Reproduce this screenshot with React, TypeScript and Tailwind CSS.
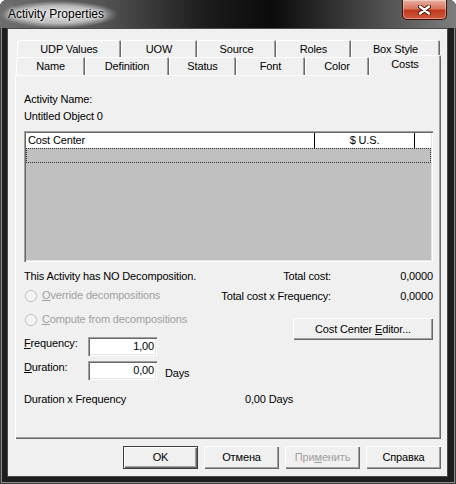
import React from 'react';

const backTabs = [
  { label: 'UDP Values', w: 'w-[104px]' },
  { label: 'UOW', w: 'w-[76px]' },
  { label: 'Source', w: 'w-[79px]' },
  { label: 'Roles', w: 'w-[75px]' },
  { label: 'Box Style', w: 'w-[89px]' },
];

const frontTabs = [
  { label: 'Name', w: 'w-[69px]' },
  { label: 'Definition', w: 'w-[84px]' },
  { label: 'Status', w: 'w-[67px]' },
  { label: 'Font', w: 'w-[69px]' },
  { label: 'Color', w: 'w-[64px]' },
];

const raised =
  'shadow-[inset_1px_1px_0_#ffffff,inset_-1px_-1px_0_#696969,inset_-2px_-2px_0_#a0a0a0]';
const sunken =
  'shadow-[inset_1px_1px_0_#a0a0a0,inset_2px_2px_0_#696969,inset_-1px_-1px_0_#ffffff,inset_-2px_-2px_0_#e3e3e3]';
const tabEdge =
  'shadow-[inset_1px_1px_0_#ffffff,inset_-1px_0_0_#696969,inset_-2px_0_0_#a0a0a0]';

function Radio({ children }: { children: React.ReactNode }) {
  return (
    <div className="flex items-center h-[13px] pl-[1px] text-[#a0a0a0]">
      <span className="w-[12px] h-[12px] rounded-full border border-[#bcbcbc] bg-[#f4f4f4] shadow-[inset_0_0_0_1px_#ffffff]" />
      <span className="ml-[5px]">{children}</span>
    </div>
  );
}

function Field({ value }: { value: string }) {
  return (
    <div className={`w-[69px] h-[19px] bg-white flex items-center justify-end pr-[3px] ${sunken}`}>
      {value}
    </div>
  );
}

export default function App() {
  return (
    <div className="w-[456px] h-[484px] bg-white font-['Liberation_Sans',Arial,sans-serif] text-[11px] leading-[13px] tracking-[-0.15px] text-black">
      <div className="w-[456px] h-[484px] rounded-t-[7px] overflow-hidden bg-[#1e1e1e] shadow-[inset_0_0_0_1px_#3c3c3c,inset_0_0_0_2px_#8a8a8a] flex flex-col">
        {/* Title bar */}
        <div className="relative h-[28px] shrink-0 flex items-center bg-[linear-gradient(90deg,#6e6e6e_0%,#555555_22%,#1c1c1c_45%,#0b0b0b_60%,#3f3f3f_78%,#7d7d7d_100%)]">
          <span className="pl-[8px] pr-[14px] py-[6px] text-[12px] leading-[15px] tracking-normal bg-[radial-gradient(closest-side,rgba(225,225,225,0.95)_0%,rgba(215,215,215,0.75)_65%,rgba(200,200,200,0)_100%)] [text-shadow:0_0_3px_#ffffff,0_0_6px_#ffffff]">
            Activity Properties
          </span>
          <div className="absolute top-0 right-[9px] w-[45px] h-[20px] flex items-center justify-center rounded-b-[5px] border border-t-0 border-[#3d1008] bg-[linear-gradient(180deg,#eab0a2_0%,#d8755f_45%,#c03a1f_55%,#cf5a3d_100%)] shadow-[inset_0_0_0_1px_rgba(255,255,255,0.35)]">
            <svg width="13" height="10" viewBox="0 0 13 10">
              <path d="M2 1.5 L11 8.5 M11 1.5 L2 8.5" stroke="#4a1209" strokeWidth="4.2" strokeLinecap="round" />
              <path d="M2 1.5 L11 8.5 M11 1.5 L2 8.5" stroke="#ffffff" strokeWidth="2.4" strokeLinecap="round" />
            </svg>
          </div>
        </div>

        {/* Client */}
        <div className="flex-1 flex pl-[7px] pr-[8px] pb-[7px]">
          <div className="w-[441px] h-[449px] border border-[#4a4a4a] bg-[#f0f0f0] flex flex-col pt-[11px] pl-[7px]">
            {/* Tabs */}
            <div className="flex h-[17px] pl-[2px]">
              {backTabs.map((t) => (
                <div key={t.label} className={`${t.w} h-[17px] rounded-t-[2px] flex items-center justify-center pt-[1px] ${tabEdge}`}>
                  {t.label}
                </div>
              ))}
            </div>
            <div className="flex h-[18px] pl-[1px] items-start">
              {frontTabs.map((t) => (
                <div key={t.label} className={`${t.w} h-[18px] rounded-t-[2px] flex items-center justify-center pt-[1px] ${tabEdge}`}>
                  {t.label}
                </div>
              ))}
              <div className={`relative z-10 w-[72px] h-[22px] -mt-[2px] rounded-t-[2px] bg-[#f0f0f0] flex justify-center pt-[3px] ${tabEdge}`}>
                Costs
              </div>
            </div>

            {/* Panel */}
            <div className={`w-[426px] h-[364px] flex flex-col pt-[18px] pl-[9px] pr-[8px] ${raised}`}>
              <div>Activity Name:</div>
              <div className="mt-[4px]">Untitled Object 0</div>

              {/* Grid */}
              <div className={`mt-[8px] h-[131px] p-[2px] bg-[#c0c0c0] flex flex-col ${sunken}`}>
                <div className="flex h-[15px] bg-white">
                  <div className="w-[289px] border-r border-black pl-[2px] pt-[1px]">Cost Center</div>
                  <div className="w-[100px] border-r border-black text-center pt-[1px]">$ U.S.</div>
                  <div className="flex-1" />
                </div>
                <div className="h-[15px] border border-dotted border-[#333333]" />
              </div>

              {/* Totals and decomposition */}
              <div className="mt-[8px] flex justify-between">
                <div className="flex flex-col">
                  <div>This Activity has NO Decomposition.</div>
                  <div className="mt-[6px]">
                    <Radio>
                      <span className="underline">O</span>verride decompositions
                    </Radio>
                  </div>
                  <div className="mt-[11px]">
                    <Radio>
                      <span className="underline">C</span>ompute from decompositions
                    </Radio>
                  </div>
                  <div className="mt-[11px] flex h-[19px]">
                    <div className="w-[64px]">
                      <span className="underline">F</span>requency:
                    </div>
                    <Field value="1,00" />
                  </div>
                  <div className="mt-[5px] flex h-[19px]">
                    <div className="w-[64px]">
                      <span className="underline">D</span>uration:
                    </div>
                    <Field value="0,00" />
                    <div className="ml-[8px] self-end">Days</div>
                  </div>
                </div>

                <div className="flex flex-col items-end">
                  <div className="flex">
                    <span>Total cost:</span>
                    <span className="w-[102px] text-right">0,0000</span>
                  </div>
                  <div className="flex mt-[7px]">
                    <span>Total cost x Frequency:</span>
                    <span className="w-[102px] text-right">0,0000</span>
                  </div>
                  <button className={`mt-[15px] w-[140px] h-[22px] bg-[#f0f0f0] ${raised}`}>
                    Cost Center <span className="underline">E</span>ditor...
                  </button>
                </div>
              </div>

              <div className="mt-[13px] flex">
                <div className="w-[221px]">Duration x Frequency</div>
                <div>0,00 Days</div>
              </div>
            </div>

            {/* Dialog buttons */}
            <div className="w-[426px] mt-[7px] flex justify-end gap-[6px]">
              <button className="w-[75px] h-[23px] bg-[#f0f0f0] shadow-[inset_0_0_0_1px_#3c3c3c,inset_2px_2px_0_#ffffff,inset_-2px_-2px_0_#696969,inset_-3px_-3px_0_#a0a0a0]">
                OK
              </button>
              <button className={`w-[75px] h-[23px] bg-[#f0f0f0] ${raised}`}>Отмена</button>
              <button className={`w-[75px] h-[23px] bg-[#f0f0f0] text-[#a0a0a0] ${raised}`}>
                При<span className="underline">м</span>енить
              </button>
              <button className={`w-[75px] h-[23px] bg-[#f0f0f0] ${raised}`}>Справка</button>
            </div>
          </div>
        </div>
      </div>
    </div>
  );
}
